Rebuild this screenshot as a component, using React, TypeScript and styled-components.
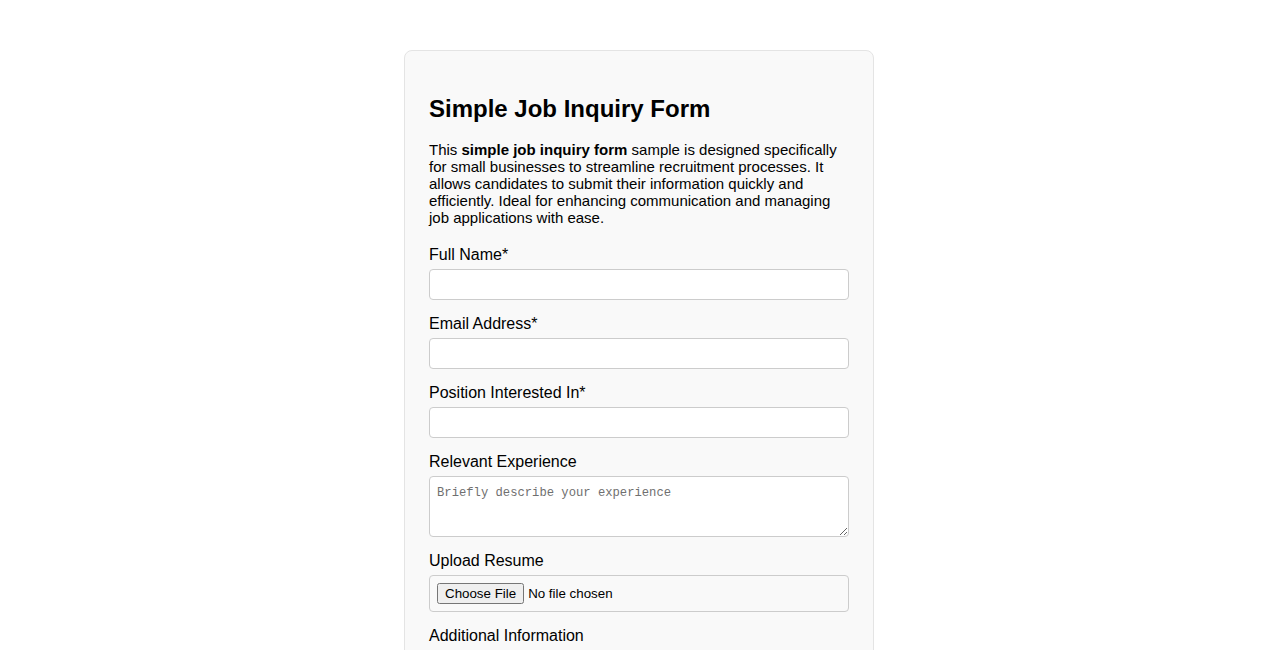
import React from 'react'
import styled, { createGlobalStyle } from 'styled-components'

const GlobalStyle = createGlobalStyle`
  body {
    margin: 0;
    background: #fff;
    font-family: 'Liberation Sans', Arial, sans-serif;
    color: #000;
  }
`

const Card = styled.div`
  max-width: 420px;
  margin: 50px auto;
  padding: 0 24px 24px;
  background: #f9f9f9;
  border: 1px solid #e4e4e4;
  border-radius: 8px;
  overflow: hidden;
`

const Title = styled.h2`
  font-size: 24px;
  font-weight: bold;
  margin: 44px 0 18px;
`

const Intro = styled.p`
  font-size: 15px;
  line-height: 17px;
  margin: 0 0 19px;
`

const Field = styled.div`
  margin-bottom: 14px;
`

const Label = styled.label`
  display: block;
  font-size: 16px;
  line-height: 20px;
  margin-bottom: 4px;
`

const TextInput = styled.input`
  display: block;
  box-sizing: border-box;
  width: 100%;
  height: 31px;
  padding: 6px 8px;
  font-family: 'Liberation Sans', Arial, sans-serif;
  font-size: 14px;
  background: #fff;
  border: 1px solid #ccc;
  border-radius: 4px;
`

const TextArea = styled.textarea`
  display: block;
  box-sizing: border-box;
  width: 100%;
  height: 61px;
  padding: 9px 7px 7px;
  font-family: 'Liberation Mono', 'DejaVu Sans Mono', monospace;
  font-size: 12.2px;
  background: #fff;
  border: 1px solid #ccc;
  border-radius: 4px;

  &::placeholder {
    color: #6f6f6f;
  }
`

const FileInput = styled.input`
  display: block;
  box-sizing: border-box;
  width: 100%;
  height: 37px;
  padding: 7px;
  font-family: 'Liberation Sans', Arial, sans-serif;
  font-size: 13.33px;
  background: transparent;
  border: 1px solid #ccc;
  border-radius: 4px;
`

const SubmitButton = styled.button`
  padding: 10px 18px;
  font-family: 'Liberation Sans', Arial, sans-serif;
  font-size: 15px;
  color: #fff;
  background: #4a7bd0;
  border: none;
  border-radius: 4px;
`

const App: React.FC = () => {
  return (
    <>
      <GlobalStyle />
      <Card>
        <Title>Simple Job Inquiry Form</Title>
        <Intro>
          This <b>simple job inquiry form</b> sample is designed specifically for small
          businesses to streamline recruitment processes. It allows candidates to submit
          their information quickly and efficiently. Ideal for enhancing communication and
          managing job applications with ease.
        </Intro>
        <form onSubmit={(event) => event.preventDefault()}>
          <Field>
            <Label htmlFor="fullName">Full Name*</Label>
            <TextInput id="fullName" type="text" required />
          </Field>
          <Field>
            <Label htmlFor="email">Email Address*</Label>
            <TextInput id="email" type="email" required />
          </Field>
          <Field>
            <Label htmlFor="position">Position Interested In*</Label>
            <TextInput id="position" type="text" required />
          </Field>
          <Field>
            <Label htmlFor="experience">Relevant Experience</Label>
            <TextArea id="experience" placeholder="Briefly describe your experience" />
          </Field>
          <Field>
            <Label htmlFor="resume">Upload Resume</Label>
            <FileInput id="resume" type="file" />
          </Field>
          <Field>
            <Label htmlFor="additional">Additional Information</Label>
            <TextArea id="additional" placeholder="Anything else we should know?" />
          </Field>
          <SubmitButton type="submit">Submit Inquiry</SubmitButton>
        </form>
      </Card>
    </>
  )
}

export default App
